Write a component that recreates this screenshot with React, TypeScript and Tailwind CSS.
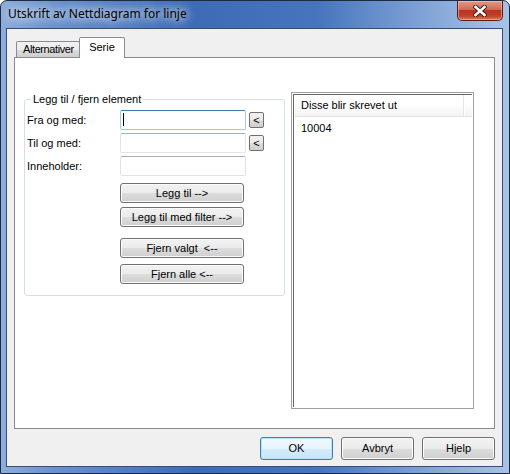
const ui = "font-['Liberation_Sans',Arial,sans-serif] text-[11px] text-black";

function WinButton({ label, className = "" }: { label: string; className?: string }) {
  return (
    <div
      className={`flex items-center justify-center rounded-[3px] border border-[#707070] bg-[linear-gradient(180deg,#f2f2f2_0%,#ebebeb_50%,#dddddd_50%,#cfcfcf_100%)] shadow-[inset_0_0_0_1px_#fcfcfc] ${className}`}
    >
      <span className="whitespace-pre leading-none">{label}</span>
    </div>
  );
}

function TextBox({ focused }: { focused?: boolean }) {
  return (
    <div
      className={
        focused
          ? "relative h-[20px] w-[126px] rounded-[2px] border border-[#a4c9e3] border-t-[#3d7bad] bg-white"
          : "relative h-[20px] w-[126px] rounded-[2px] border border-[#e2e3ea] border-t-[#abadb3] bg-white"
      }
    >
      {focused && <div className="absolute left-[2px] top-[2px] h-[13px] w-[1px] bg-black" />}
    </div>
  );
}

function CloseButton() {
  return (
    <div className="flex h-[20px] w-[46px] items-center justify-center rounded-b-[5px] border border-t-0 border-[#5a1c14] bg-[linear-gradient(180deg,#e29a88_0%,#cf6a55_45%,#b8341f_50%,#c2422a_80%,#dc7f5c_100%)] shadow-[inset_0_0_0_1px_rgba(255,220,210,0.45)]">
      <svg width="14" height="12" viewBox="0 0 14 12">
        <path d="M2.5 2 L11.5 10 M11.5 2 L2.5 10" stroke="#4a1a12" strokeWidth="4.5" strokeLinecap="square" />
        <path d="M2.5 2 L11.5 10 M11.5 2 L2.5 10" stroke="#ffffff" strokeWidth="2.6" strokeLinecap="square" />
      </svg>
    </div>
  );
}

function FieldRow({ label, focused, pick }: { label: string; focused?: boolean; pick?: boolean }) {
  return (
    <div className="flex h-[20px] items-center">
      <span className="w-[93px] leading-none">{label}</span>
      <TextBox focused={focused} />
      {pick && (
        <div className="ml-[3px] flex h-[16px] w-[15px] items-center justify-center rounded-[2px] border border-[#707070] bg-[linear-gradient(180deg,#f2f2f2_0%,#ebebeb_50%,#dddddd_50%,#cfcfcf_100%)]">
          <span className="leading-none">&lt;</span>
        </div>
      )}
    </div>
  );
}

export default function App() {
  return (
    <div className={`h-[474px] w-[510px] bg-white ${ui}`}>
      <div className="flex h-full w-full flex-col rounded-t-[7px] border border-[#1d2a44] pb-[6px] pl-[5px] pr-[6px] bg-[linear-gradient(90deg,#8eaddb_0%,#6b93cd_10%,#3e6bb6_38%,#4674bd_62%,#87a9d9_86%,#a9c2e6_100%)]">
        {/* title bar */}
        <div className="flex h-[27px] items-start justify-between">
          <div className="pl-[2px] pt-[6px] font-['Noto_Sans',sans-serif] text-[12px] leading-[14px] text-black [text-shadow:0_0_8px_rgba(255,255,255,1),0_0_12px_rgba(255,255,255,0.9)]">
            Utskrift av Nettdiagram for linje
          </div>
          <CloseButton />
        </div>

        {/* client area */}
        <div className="flex flex-1 flex-col border border-[#34507a] bg-[#f0f0f0] px-[7px] pt-[8px]">
          {/* tabs */}
          <div className="flex h-[20px] items-end pl-[2px]">
            <div className="flex h-[16px] w-[64px] items-center rounded-t-[2px] border border-b-0 border-[#898c95] bg-[linear-gradient(180deg,#f2f2f2_0%,#ebebeb_50%,#dddddd_50%,#cfcfcf_100%)] pl-[6px]">
              <span className="leading-none tracking-[-0.4px]">Alternativer</span>
            </div>
            <div className="relative z-10 -mb-[1px] -ml-[1px] flex h-[21px] w-[46px] items-start justify-center rounded-t-[2px] border border-b-0 border-[#898c95] bg-white pt-[4px]">
              <span className="leading-none">Serie</span>
            </div>
          </div>

          {/* tab page */}
          <div className="flex h-[372px] items-start border border-[#898c95] bg-white">
            {/* group box */}
            <div className="relative ml-[9px] mt-[41px] h-[197px] w-[261px] rounded-[3px] border border-[#d5dfe5]">
              <span className="absolute -top-[7px] left-[6px] bg-white px-[2px] leading-[13px]">
                Legg til / fjern element
              </span>
              <div className="flex flex-col gap-[3px] pl-[2px] pt-[10px]">
                <FieldRow label="Fra og med:" focused pick />
                <FieldRow label="Til og med:" pick />
                <FieldRow label="Inneholder:" />
              </div>
              <div className="ml-[95px] mt-[7px] flex flex-col">
                <WinButton label="Legg til -->" className="h-[20px] w-[124px]" />
                <WinButton label="Legg til med filter -->" className="mt-[4px] h-[20px] w-[124px]" />
                <WinButton label="Fjern valgt  <--" className="mt-[11px] h-[20px] w-[124px]" />
                <WinButton label="Fjern alle <--" className="mt-[6px] h-[20px] w-[124px]" />
              </div>
            </div>

            {/* list view */}
            <div className="ml-[6px] mt-[34px] h-[317px] w-[183px] border border-[#a0a0a0] bg-white p-[1px]">
              <div className="h-full w-full border-l border-t border-[#696969]">
                <div className="flex h-[22px] border-b border-[#e5e5e5] bg-[linear-gradient(180deg,#ffffff_0%,#ffffff_40%,#f3f3f3_100%)]">
                  <div className="flex w-[170px] items-center border-r border-[#e5e5e5] pl-[7px]">
                    <span className="leading-none">Disse blir skrevet ut</span>
                  </div>
                  <div className="flex-1 border-l border-white" />
                </div>
                <div className="pl-[7px] pt-[6px] leading-none">10004</div>
              </div>
            </div>
          </div>

          {/* dialog buttons */}
          <div className="mt-[8px] flex justify-end gap-[8px]">
            <div className="flex h-[23px] w-[73px] items-center justify-center rounded-[3px] border border-[#3c7fb1] bg-[linear-gradient(180deg,#f4fafe_0%,#e6f4fc_50%,#d4ecfb_50%,#c6e6f9_100%)] shadow-[inset_0_0_0_1px_#b6e2fa]">
              <span className="leading-none">OK</span>
            </div>
            <WinButton label="Avbryt" className="h-[23px] w-[73px]" />
            <WinButton label="Hjelp" className="h-[23px] w-[73px]" />
          </div>
        </div>
      </div>
    </div>
  );
}
